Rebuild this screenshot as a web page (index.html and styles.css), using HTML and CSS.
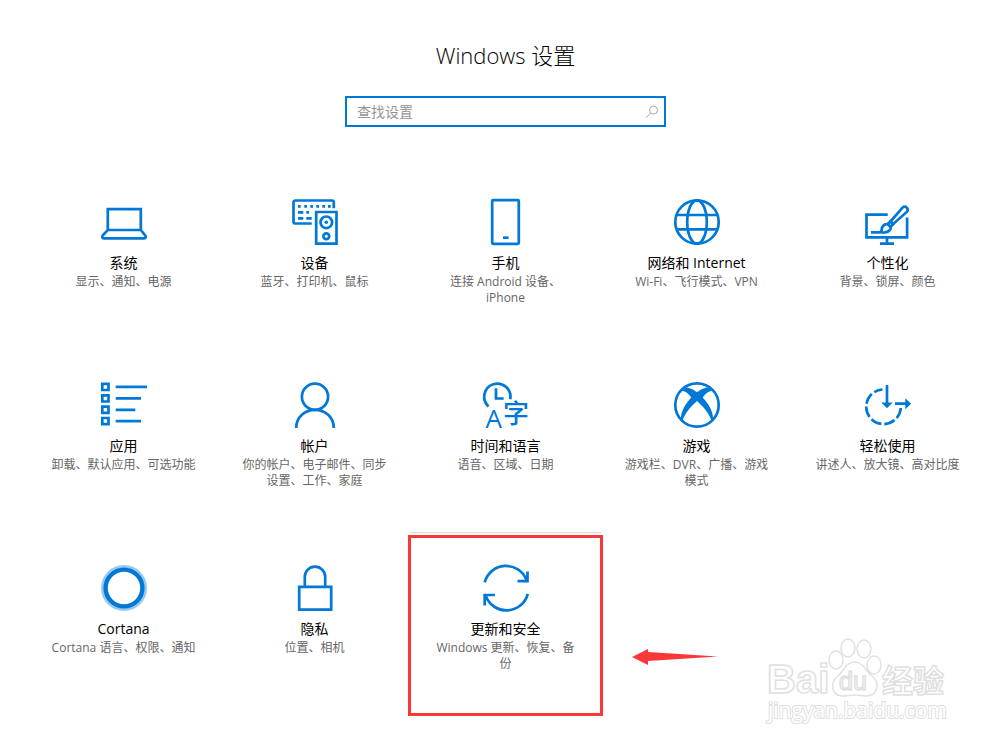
FILE: index.html
```
<!DOCTYPE html>
<html lang="zh-CN">
<head>
	<meta charset="utf-8">
	<meta name="viewport" content="width=device-width, initial-scale=1">
	<title>Windows 设置</title>
	<link rel="stylesheet" href="styles.css">
</head>
<body>
	<header class="top">
		<h1>Windows 设置</h1>
		<form class="search" role="search">
			<input type="text" id="find" aria-label="查找设置" placeholder="查找设置">
			<button type="button" aria-label="搜索">
				<svg width="14" height="14" viewBox="0 0 14 14"><circle cx="8.5" cy="5" r="4"/><path d="M5.7 8L1 12.700"/></svg>
			</button>
		</form>
	</header>

	<main class="grid">
		<a class="tile" href="#system">
			<svg class="icon" viewBox="0 0 46 46"><path d="M6.800 31V10.200h33V31M6.800 31h33l4.400 5.400q1.600 2.900-1.200 2.900H3q-2.800 0-1.200-2.900z"/></svg>
			<span class="name">系统</span>
			<span class="desc">显示、通知、电源</span>
		</a>
		<a class="tile" href="#devices">
			<svg class="icon" viewBox="0 0 46 46">
				<path d="M41.800 9.300V3.500q0-2-2-2H3.500q-2 0-2 2v19q0 2 2 2h16.200"/>
				<path d="M6 7.300h2.700M12.300 7.300H15M18.300 7.300H21M24.300 7.300H27M30.300 7.300H33M36 7.300h2.700M6 13.300h5.300M14.300 13.300H17M6 19.300h5.300M14.300 19.300h5.400"/>
				<path d="M24.200 13h20.300v31.700H24.200z"/>
				<circle cx="34.300" cy="23.300" r="5.800"/><circle class="fill" cx="34.300" cy="23.300" r="1.800"/>
				<circle cx="34.300" cy="37.300" r="2.900"/>
			</svg>
			<span class="name">设备</span>
			<span class="desc">蓝牙、打印机、鼠标</span>
		</a>
		<a class="tile" href="#phone">
			<svg class="icon" viewBox="0 0 46 46"><rect x="9.200" y="1.200" width="26.600" height="43.600" rx="1"/><path d="M20 38.700h5.600"/></svg>
			<span class="name">手机</span>
			<span class="desc">连接 Android 设备、iPhone</span>
		</a>
		<a class="tile" href="#network">
			<svg class="icon" viewBox="0 0 46 46"><circle cx="23" cy="23" r="21.700"/><ellipse cx="23" cy="23" rx="9.800" ry="21.700"/><path d="M3 16h40M3 30.300h40"/></svg>
			<span class="name">网络和 Internet</span>
			<span class="desc">Wi-Fi、飞行模式、VPN</span>
		</a>
		<a class="tile" href="#personal">
			<svg class="icon" viewBox="0 0 46 46">
				<path d="M22.700 15.700H1.500v22.600h40.600V18.500M22 38v6.500M15 44.700h14"/>
				<path d="M25.500 22.500L37.500 8.600q2.300-2 4.300 0t0 4.300L28 25.200z"/>
				<path d="M22.500 25.300l3-2.800 2.500 2.700-3 3.500"/>
				<path d="M6 33.300h9q2-1 2-4.500 2-4.500 6-3.500 4 3 2 5.500-2 3-7 2.700h-4"/>
			</svg>
			<span class="name">个性化</span>
			<span class="desc">背景、锁屏、颜色</span>
		</a>

		<a class="tile" href="#apps">
			<svg class="icon" viewBox="0 0 46 46">
				<path d="M1.300 1.800h6.200v6.200H1.300zM1.300 13.300h6.200v6.200H1.300zM1.300 24.700h6.200v6.200H1.300zM1.300 36h6.200v6.200H1.300z"/>
				<path d="M14.700 4.800H46M14.700 16.400H40M14.700 27.800h19.600M14.700 39.200H40"/>
			</svg>
			<span class="name">应用</span>
			<span class="desc">卸载、默认应用、可选功能</span>
		</a>
		<a class="tile" href="#accounts">
			<svg class="icon" viewBox="0 0 46 46"><circle cx="23" cy="14.700" r="13.100"/><path d="M4.200 46C4.200 35 13 27.800 23 27.800S41.800 35 41.800 46"/></svg>
			<span class="name">帐户</span>
			<span class="desc">你的帐户、电子邮件、同步设置、工作、家庭</span>
		</a>
		<a class="tile" href="#time">
			<svg class="icon" viewBox="0 0 46 46">
				<path d="M5.500 24.400A13.100 13.100 0 1 1 27.200 17.200M13 6.300v10.200h7.700"/>
				<text class="glyph" x="2.500" y="45.500">A</text><text class="glyph" x="20" y="41">字</text>
			</svg>
			<span class="name">时间和语言</span>
			<span class="desc">语音、区域、日期</span>
		</a>
		<a class="tile" href="#gaming">
			<svg class="icon" viewBox="0 0 46 46">
				<circle cx="23" cy="23" r="21.700"/>
				<path class="fill" d="M23 10.200C20 8 17 6.500 12.500 5.300L7.500 9C11 8.500 14 11 17.300 15.500 12 21.500 6.500 29 7 37.500l1.500 1C11 31.500 16.500 24.500 23 19c6.500 5.500 12 12.500 14.500 19.500l1.500-1C39.500 29 34 21.500 28.700 15.500 32 11 35 8.500 38.500 9l-5-3.700C29 6.500 26 8 23 10.200z"/>
			</svg>
			<span class="name">游戏</span>
			<span class="desc">游戏栏、DVR、广播、游戏模式</span>
		</a>
		<a class="tile" href="#ease">
			<svg class="icon" viewBox="0 0 46 46">
				<path stroke-dasharray="11 3" d="M35.800 26A17.300 17.300 0 1 1 17.500 7.500"/>
				<path d="M22 3v19M30 21.700h12"/>
				<path class="fill" d="M16.300 20.500h11.400L22 26.300zM40.300 16.300v11l5.700-5.500z"/>
			</svg>
			<span class="name">轻松使用</span>
			<span class="desc">讲述人、放大镜、高对比度</span>
		</a>

		<a class="tile" href="#cortana">
			<svg class="icon" viewBox="0 0 46 46"><circle class="halo" cx="23" cy="23" r="21.500"/><circle class="ring" cx="23" cy="23" r="18.400"/></svg>
			<span class="name">Cortana</span>
			<span class="desc">Cortana 语言、权限、通知</span>
		</a>
		<a class="tile" href="#privacy">
			<svg class="icon" viewBox="0 0 46 46"><path d="M7.200 21.800h32v22.900h-32zM12.800 21.800v-10a10 10 0 0 1 20.400 0v10"/></svg>
			<span class="name">隐私</span>
			<span class="desc">位置、相机</span>
		</a>
		<a class="tile active" href="#update">
			<svg class="icon" viewBox="0 0 46 46">
				<path d="M1.700 17.300A22 22 0 0 1 43.500 15M44.500 6.500v9.700H34.500"/>
				<path d="M44.800 28.800A22 22 0 0 1 3 31.500M12 30H1.700v10.500"/>
			</svg>
			<span class="name">更新和安全</span>
			<span class="desc">Windows 更新、恢复、备份</span>
			<span class="mark"></span>
			<svg class="arrow" viewBox="0 0 86 16"><path d="M0 8L16 0v3l70 4.500L16 12v4z"/></svg>
		</a>
	</main>

	<svg class="logo" viewBox="0 0 190 94">
		<text class="bai" x="7" y="61">Bai</text>
		<ellipse cx="76" cy="28" rx="7" ry="9"/>
		<ellipse cx="88" cy="16" rx="7" ry="9"/>
		<ellipse cx="104" cy="17" rx="7" ry="9"/>
		<ellipse cx="114" cy="33" rx="7" ry="9"/>
		<path d="M94.500 30C85 30 84 40 77 45 70 51 71 64 83 64c5 0 7-1 12-1s7 1 11 1c12 0 14-13 7-19C106 40 104 30 94.500 30z"/>
		<text class="du" x="79" y="58">du</text>
		<text class="jy" x="122" y="60">经验</text>
		<text class="url" x="8" y="86">jingyan.baidu.com</text>
	</svg>
</body>
</html>
```
FILE: styles.css
```
*{box-sizing: border-box;}
body{margin: 0;
	position: relative;
	min-height: 100vh;
	padding: 40px 17px 0 28px;
	background: #fff;
	color: #000;
	font-family: "Open Sans", "Noto Sans CJK SC", sans-serif;}

.top{display: flex;
	flex-direction: column;
	align-items: center;
	gap: 26px;
	margin-bottom: 39px;}
h1{margin: 0;
	font-size: 22px;
	font-weight: 300;
	line-height: 30px;}

.search{display: flex;
	align-items: center;
	width: 100%;
	max-width: 321px;
	height: 31px;
	border: 2px solid #0078d7;}
.search input{flex: 1;
	min-width: 0;
	padding: 0 10px;
	border: 0;
	outline: 0;
	background: none;
	font: 14px/20px "Open Sans", "Noto Sans CJK SC", sans-serif;}
.search input::placeholder{color: #949494; opacity: 1;}
.search button{display: flex;
	padding: 0 5px;
	border: 0;
	background: none;}
.search svg{fill: none; stroke: #aaa;}

.grid{display: grid;
	grid-template-columns: repeat(5, 1fr);
	grid-auto-rows: minmax(183px, auto);}
.tile{position: relative;
	display: flex;
	flex-direction: column;
	align-items: center;
	padding: 33px 22px 0;
	color: #000;
	text-align: center;
	text-decoration: none;}
.active{border-top: 1px solid #ddd; padding-top: 32px;}

.icon{width: 46px;
	height: 46px;
	margin-bottom: 9px;
	fill: none;
	stroke: #0078d7;
	stroke-width: 2.7;
	overflow: visible;}
.icon .fill{fill: #0078d7; stroke: none;}
.icon .halo{stroke: #99c9ef; stroke-width: 3;}
.icon .ring{stroke-width: 4.4;}
.icon .glyph{fill: #0078d7;
	stroke: none;
	font-size: 26px;
	font-weight: 500;}

.name{font-size: 14px; line-height: 18px;}
.desc{margin-top: 2px;
	font-size: 12px;
	line-height: 16px;
	color: #666;}

/* red box and arrow over the update tile */
.mark{position: absolute;
	inset: 2px -2px -1px;
	border: 3px solid #fb3838;}
.arrow{position: absolute;
	left: 222px;
	top: 116px;
	width: 86px;
	height: 16px;
	fill: #fb3838;}

.logo{position: absolute;
	right: 50px;
	bottom: 20px;
	width: 190px;
	height: 94px;
	fill: #fff;
	stroke: #e0e0e0;
	stroke-width: 1.5;
	overflow: visible;}
.bai{font: bold 40px "Liberation Sans", sans-serif;}
.du{font: 25px "Liberation Sans", sans-serif;}
.jy{font: bold 31px "Noto Sans CJK SC", sans-serif;}
.url{font: 21px "Open Sans", sans-serif; stroke-width: 2; paint-order: stroke;}
```
